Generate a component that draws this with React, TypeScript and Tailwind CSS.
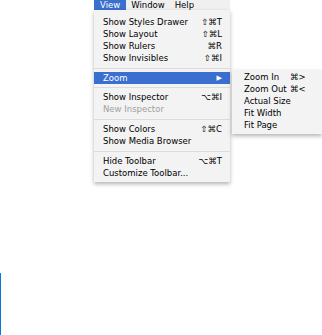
import React from 'react';

type Item =
  | { kind: 'item'; label: string; keys?: string; disabled?: boolean; active?: boolean; submenu?: boolean }
  | { kind: 'sep'; h: string };

const viewMenu: Item[] = [
  { kind: 'item', label: 'Show Styles Drawer', keys: '⇧⌘T' },
  { kind: 'item', label: 'Show Layout', keys: '⇧⌘L' },
  { kind: 'item', label: 'Show Rulers', keys: '⌘R' },
  { kind: 'item', label: 'Show Invisibles', keys: '⇧⌘I' },
  { kind: 'sep', h: 'h-[8px]' },
  { kind: 'item', label: 'Zoom', active: true, submenu: true },
  { kind: 'sep', h: 'h-[7px]' },
  { kind: 'item', label: 'Show Inspector', keys: '⌥⌘I' },
  { kind: 'item', label: 'New Inspector', disabled: true },
  { kind: 'sep', h: 'h-[8px]' },
  { kind: 'item', label: 'Show Colors', keys: '⇧⌘C' },
  { kind: 'item', label: 'Show Media Browser' },
  { kind: 'sep', h: 'h-[8px]' },
  { kind: 'item', label: 'Hide Toolbar', keys: '⌥⌘T' },
  { kind: 'item', label: 'Customize Toolbar...' },
];

const zoomMenu = [
  { label: 'Zoom In', keys: '⌘>' },
  { label: 'Zoom Out', keys: '⌘<' },
  { label: 'Actual Size' },
  { label: 'Fit Width' },
  { label: 'Fit Page' },
];

const font = 'font-["DejaVu_Sans",sans-serif] text-[8.5px] leading-none';

export default function App() {
  return (
    <div className={`relative h-[335px] w-[322px] overflow-hidden bg-white ${font}`}>
      {/* menu bar */}
      <div className="ml-[94px] flex h-[10px] w-[136px] items-center bg-[#f0f0f0] text-black">
        <span className="flex h-full items-center bg-[#3a6fd0] px-[6px] text-white">View</span>
        <span className="ml-[5px]">Window</span>
        <span className="ml-[10px]">Help</span>
      </div>

      {/* View menu */}
      <div className="absolute left-[94px] top-[10px] w-[136px] bg-[#f3f3f3] pb-[3px] pt-[6px] shadow-[0_2px_4px_rgba(0,0,0,0.3)]">
        {viewMenu.map((it, i) =>
          it.kind === 'sep' ? (
            <div key={i} className={`flex items-center ${it.h}`}>
              <div className="h-px w-full bg-[#dcdcdc]" />
            </div>
          ) : (
            <div
              key={i}
              className={`flex h-[12px] items-center justify-between whitespace-nowrap pl-[9px] pr-[8px] ${
                it.active ? 'bg-[#3a6fd0] text-white' : it.disabled ? 'text-[#a0a0a0]' : 'text-black'
              }`}
            >
              <span>{it.label}</span>
              {it.keys && <span>{it.keys}</span>}
              {it.submenu && <span className="text-[7px]">▶</span>}
            </div>
          ),
        )}
      </div>

      {/* Zoom submenu */}
      <div className="absolute left-[232px] top-[70px] w-[90px] bg-[#f3f3f3] pb-[3px] pt-px shadow-[0_2px_4px_rgba(0,0,0,0.3)]">
        {zoomMenu.map((it) => (
          <div key={it.label} className="flex h-[12px] items-center whitespace-nowrap pl-[12px] text-black">
            <span className="w-[46px] shrink-0">{it.label}</span>
            {it.keys && <span>{it.keys}</span>}
          </div>
        ))}
      </div>

      {/* insertion caret */}
      <div className="ml-0 mt-[263px] h-[62px] w-px bg-[#0a78d7]" />
    </div>
  );
}
